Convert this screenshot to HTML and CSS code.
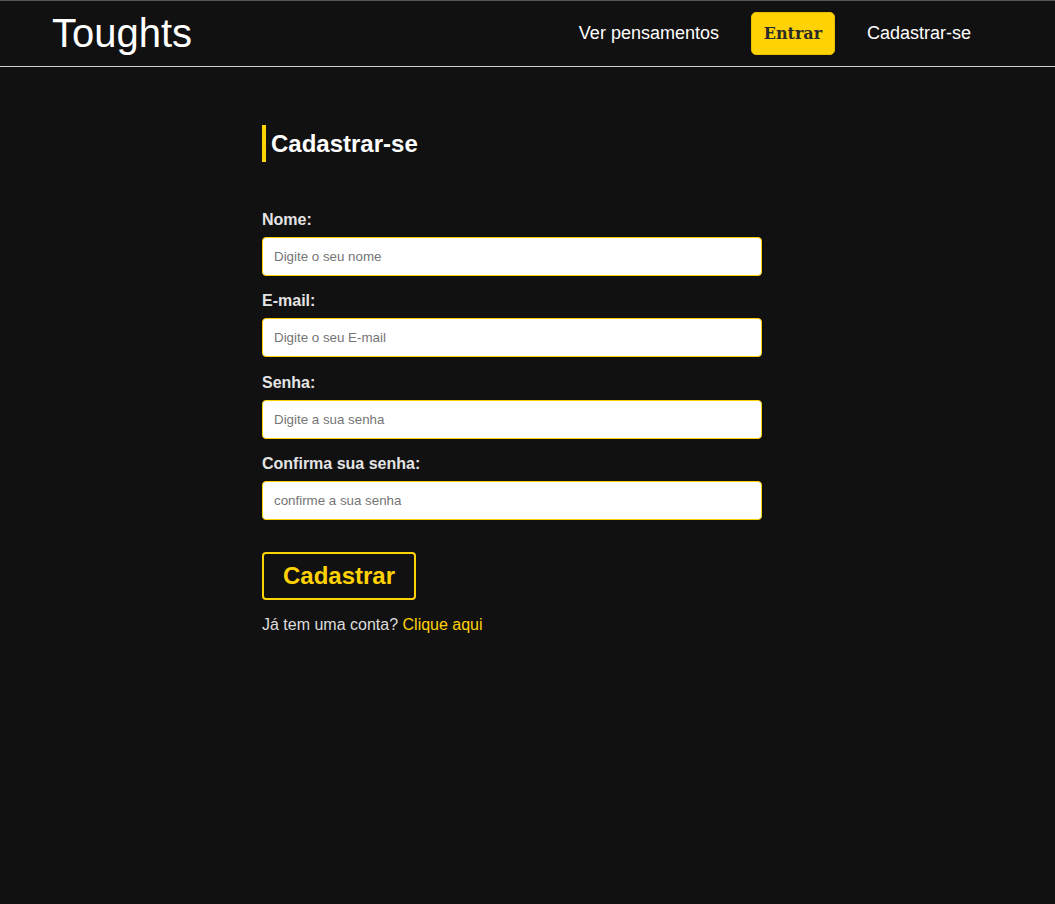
FILE: index.html
```html
<!DOCTYPE html>
<html lang="pt-BR">
<head>
<meta charset="utf-8">
<title>Toughts</title>
<link rel="stylesheet" href="styles.css">
</head>
<body>
<header class="navbar">
  <a class="logo" href="#">Toughts</a>
  <nav class="nav">
    <a class="nav-link" href="#">Ver pensamentos</a>
    <a class="nav-btn" href="#">Entrar</a>
    <a class="nav-link" href="#">Cadastrar-se</a>
  </nav>
</header>
<main class="container">
  <h1 class="title">Cadastrar-se</h1>
  <form class="form">
    <div class="field">
      <label class="label">Nome:</label>
      <input class="input" type="text" placeholder="Digite o seu nome">
    </div>
    <div class="field">
      <label class="label">E-mail:</label>
      <input class="input" type="email" placeholder="Digite o seu E-mail">
    </div>
    <div class="field">
      <label class="label">Senha:</label>
      <input class="input" type="password" placeholder="Digite a sua senha">
    </div>
    <div class="field">
      <label class="label">Confirma sua senha:</label>
      <input class="input" type="password" placeholder="confirme a sua senha">
    </div>
    <button class="submit" type="button">Cadastrar</button>
  </form>
  <p class="alt">Já tem uma conta? <a href="#">Clique aqui</a></p>
</main>
</body>
</html>
```
FILE: styles.css
```css
* { box-sizing: border-box; }
body {
  margin: 0;
  background: #111111;
  color: #ffffff;
  font-family: "Liberation Sans", Arial, sans-serif;
}
a { text-decoration: none; }
.navbar {
  height: 67px;
  border-top: 1px solid #555;
  border-bottom: 1px solid #cfcfcf;
  display: flex;
  align-items: center;
  justify-content: space-between;
  padding: 0 84px 0 52px;
}
.logo {
  color: #fff;
  font-size: 40px;
  line-height: 1;
  margin-top: -2px;
}
.nav {
  display: flex;
  align-items: center;
  gap: 32px;
}
.nav-link {
  color: #fff;
  font-size: 18px;
}
.nav-btn {
  background: #ffd204;
  color: #2a2a2a;
  font-family: "DejaVu Serif", Georgia, serif;
  font-weight: bold;
  font-size: 16px;
  width: 84px;
  height: 43px;
  display: flex;
  align-items: center;
  justify-content: center;
  border-radius: 5px;
  border: 1px solid #e8c000;
  margin-top: -1px;
}
.container {
  width: 531px;
  margin: 0 auto;
  padding-top: 58px;
}
.title {
  margin: 0 0 49px;
  border-left: 4px solid #ffd204;
  padding: 5px 0 5px 5px;
  font-size: 24px;
  line-height: 27px;
  color: #fff;
}
.form {
  width: 500px;
}
.field {
  margin-bottom: 16.4px;
}
.label {
  display: block;
  font-weight: bold;
  font-size: 16px;
  color: #e4e4e4;
  margin-bottom: 8px;
}
.input {
  display: block;
  width: 500px;
  height: 39px;
  border: 1px solid #ffd204;
  border-radius: 4px;
  padding: 0 11px;
  font-family: "Liberation Sans", Arial, sans-serif;
  font-size: 13.333px;
  background: #fff;
}
.input::placeholder { color: #757575; }
.submit {
  margin-top: 15px;
  background: transparent;
  border: 2px solid #ffd204;
  border-radius: 4px;
  color: #ffd204;
  font-family: "Liberation Sans", Arial, sans-serif;
  font-weight: bold;
  font-size: 24px;
  width: 154px;
  height: 48px;
}
.alt {
  margin: 16px 0 0;
  font-size: 16px;
  color: #ddd;
}
.alt a { color: #ffd204; }
```
